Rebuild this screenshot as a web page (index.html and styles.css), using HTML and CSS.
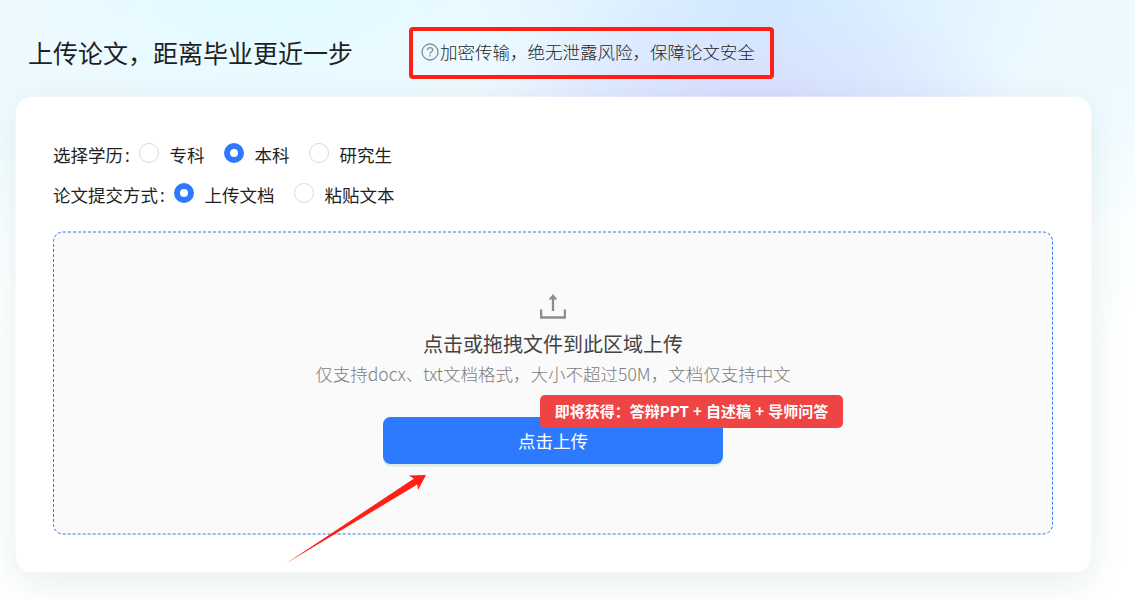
FILE: index.html
```html
<!DOCTYPE html>
<html lang="zh-CN">
<head>
<meta charset="utf-8">
<title>上传论文</title>
<link rel="stylesheet" href="styles.css">
</head>
<body>
<div class="page">
  <header class="header">
    <h1 class="title">上传论文，距离毕业更近一步</h1>
    <div class="notice">
      <svg class="help" viewBox="0 0 18 18" fill="none" stroke="currentColor"><circle cx="9" cy="9" r="8" stroke-width="1.3"/><path d="M6.5 7.300c0-3.700 5.200-3.400 5.200-.4 0 1.900-2.700 1.700-2.700 4" stroke-width="1.3"/><path d="M9 12.1v1.5" stroke-width="1.5"/></svg>
      <span>加密传输，绝无泄露风险，保障论文安全</span>
    </div>
  </header>
  <main class="card">
    <div class="field">
      <span class="label">选择学历<span class="colon">:</span></span>
      <span class="option"><i class="radio"></i><span class="text">专科</span></span>
      <span class="option"><i class="radio checked"></i><span class="text">本科</span></span>
      <span class="option"><i class="radio"></i><span class="text">研究生</span></span>
    </div>
    <div class="field">
      <span class="label wide">论文提交方式<span class="colon">:</span></span>
      <span class="option"><i class="radio checked"></i><span class="text">上传文档</span></span>
      <span class="option"><i class="radio"></i><span class="text">粘贴文本</span></span>
    </div>
    <section class="dropzone">
      <svg class="frame"><rect x="0.5" y="1" width="999" height="302" rx="9.5"/></svg>
      <svg class="upload" viewBox="0 0 26 25" fill="none" stroke="currentColor"><path d="M1.1 15.500v8h23.800v-8M13 17V4" stroke-width="2.3"/><path d="M13 0l4.300 5.400H8.700z" fill="currentColor" stroke="none"/></svg>
      <p class="lead">点击或拖拽文件到此区域上传</p>
      <p class="sub">仅支持docx、txt文档格式，大小不超过50M，文档仅支持中文</p>
      <div class="action">
        <button class="button">点击上传</button>
        <span class="badge">即将获得：答辩PPT + 自述稿 + 导师问答</span>
      </div>
    </section>
  </main>
  <svg class="arrow" viewBox="0 0 140 90"><path d="M0 88.500L125 5.500L128 3.800L122.800 0.600L140 0L132 15L131.300 9.300L128 11.500z"/></svg>
</div>
</body>
</html>
```
FILE: styles.css
```css
* { box-sizing: border-box; }
body { margin: 0; font-family: "Noto Sans CJK SC", sans-serif; color: #1f1f1f; }
h1, p { margin: 0; font-weight: 400; }
.page {
  position: relative; width: 1135px; height: 600px; overflow: hidden; padding-left: 16px;
  background:
    radial-gradient(ellipse 260px 130px at 275px -15px, rgba(220, 252, 255, .75), rgba(220, 252, 255, 0)),
    radial-gradient(ellipse 290px 145px at 750px 130px, rgba(210, 212, 252, .85), rgba(210, 212, 252, 0)),
    radial-gradient(ellipse 290px 180px at 765px -10px, rgba(205, 232, 255, .9), rgba(205, 232, 255, 0)),
    linear-gradient(180deg, #ecf9ff 0, #edfaff 90px, #f5fdff 170px, #fcffff 240px, #fff 350px);
}
.header { display: flex; height: 97px; align-items: flex-start; }
.title { width: 393px; padding-left: 12px; margin-top: 34px; font-size: 25px; line-height: 37px; }
.notice {
  display: flex; width: 365px; height: 52px; margin-top: 27px; padding: 0 8px;
  border: 4px solid #ff1f14; border-radius: 4px; font-size: 17.5px; font-weight: 300; line-height: 41px; white-space: nowrap;
}
.help { width: 18px; height: 18px; margin: 11.500px 1px 0 0; color: #858b93; }
.card {
  width: 1075px; height: 475px; border-radius: 16px; padding: 36px 37px; background: #fff;
  box-shadow: 0 0 0 .6px rgba(255, 255, 255, .5), 0 10px 37px rgba(15, 90, 100, .1);
}
.field { display: flex; height: 40px; align-items: center; font-size: 17.5px; }
.label { width: 86px; padding-top: 3px; white-space: nowrap; }
.wide { width: 121px; }
.colon { margin-left: 2px; font-family: "Noto Sans", sans-serif; line-height: 1; }
.option { display: flex; align-items: center; margin-right: 19.500px; }
.radio { width: 20px; height: 20px; border: 1px solid #d9d9d9; border-radius: 50%; background: #fff; }
.checked { border: 6.250px solid #2d7aff; }
.text { margin-left: 10.500px; padding-top: 3px; white-space: nowrap; }
.dropzone {
  position: relative; display: flex; flex-direction: column; align-items: center;
  width: 1000px; height: 304px; margin-top: 18px; padding-top: 63px; background: #fafafa; border-radius: 10px;
}
.frame { position: absolute; inset: 0; width: 1000px; height: 304px; fill: none; stroke: #2d7aff; stroke-dasharray: 3 2; }
.upload { width: 26px; height: 25px; color: #8c8c8c; }
.lead { margin-top: 10px; font-size: 20px; line-height: 30px; color: #434343; }
.sub { margin-top: 2px; font-size: 17.530px; line-height: 26px; font-weight: 300; color: #7d7d7d; }
.action { position: relative; margin-top: 29.500px; }
.button {
  display: block; width: 340px; height: 47.500px; border: 0; border-radius: 7.500px; padding: 0;
  background: #2d7aff; color: #fff; font: 400 17.500px "Noto Sans CJK SC", sans-serif; box-shadow: 0 2.500px 0 rgba(5, 145, 85, .13);
}
.badge {
  position: absolute; left: 157px; top: -22px; width: 303px; height: 33px; border-radius: 5px;
  background: #ef4444; color: #fff; font-size: 15px; font-weight: 700; line-height: 31px; text-align: center; white-space: nowrap; word-spacing: .75px;
}
.arrow { position: absolute; left: 286px; top: 475px; width: 140px; height: 90px; fill: #ff1f14; }
```
